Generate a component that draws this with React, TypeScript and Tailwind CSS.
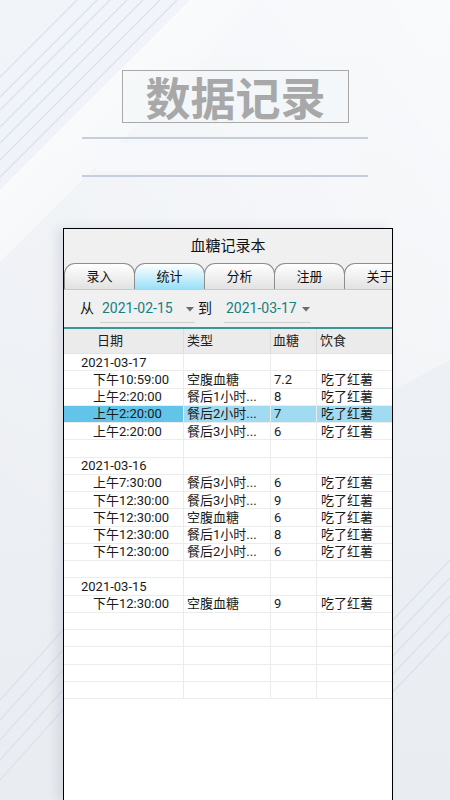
import React from "react";

type Row = { date?: string; time?: string; type?: string; sugar?: string; food?: string; selected?: boolean };

const rows: Row[] = [
  { date: "2021-03-17" },
  { time: "下午10:59:00", type: "空腹血糖", sugar: "7.2", food: "吃了红薯" },
  { time: "上午2:20:00", type: "餐后1小时...", sugar: "8", food: "吃了红薯" },
  { time: "上午2:20:00", type: "餐后2小时...", sugar: "7", food: "吃了红薯", selected: true },
  { time: "上午2:20:00", type: "餐后3小时...", sugar: "6", food: "吃了红薯" },
  {},
  { date: "2021-03-16" },
  { time: "上午7:30:00", type: "餐后3小时...", sugar: "6", food: "吃了红薯" },
  { time: "下午12:30:00", type: "餐后3小时...", sugar: "9", food: "吃了红薯" },
  { time: "下午12:30:00", type: "空腹血糖", sugar: "6", food: "吃了红薯" },
  { time: "下午12:30:00", type: "餐后1小时...", sugar: "8", food: "吃了红薯" },
  { time: "下午12:30:00", type: "餐后2小时...", sugar: "6", food: "吃了红薯" },
  {},
  { date: "2021-03-15" },
  { time: "下午12:30:00", type: "空腹血糖", sugar: "9", food: "吃了红薯" },
  {},
  {},
  {},
  {},
  {},
];

const tabs = ["录入", "统计", "分析", "注册", "关于"];

// background decoration: white diagonal band and thin stripes
const Backdrop: React.FC = () => (
  <svg className="absolute inset-0" width="450" height="800" viewBox="0 0 450 800">
    <defs>
      <linearGradient id="band" x1="0" y1="0" x2="1" y2="1">
        <stop offset="0" stopColor="#ffffff" stopOpacity="0.95" />
        <stop offset="1" stopColor="#ffffff" stopOpacity="0" />
      </linearGradient>
      <linearGradient id="glow" x1="1" y1="0" x2="0" y2="1">
        <stop offset="0" stopColor="#ffffff" stopOpacity="0.55" />
        <stop offset="0.6" stopColor="#ffffff" stopOpacity="0.15" />
        <stop offset="1" stopColor="#ffffff" stopOpacity="0" />
      </linearGradient>
    </defs>
    <polygon points="262,0 450,0 450,360 0,600 0,262" fill="url(#glow)" />
    <polygon points="190,0 262,0 0,262 0,190" fill="url(#band)" />
    {[77, 97, 110, 127, 143, 160, 177].map((x) => (
      <line key={x} x1={x} y1={0} x2={0} y2={x} stroke="#d6e2f0" strokeWidth="1.2" />
    ))}
    {[560, 578, 596, 614, 632].map((y) => (
      <line key={y} x1={393} y1={y + 60} x2={450} y2={y} stroke="#d6e2f0" strokeWidth="1.2" />
    ))}
    {[700, 720, 740, 760, 780].map((y) => (
      <line key={y} x1={0} y1={y} x2={63} y2={y - 70} stroke="#d9e3ef" strokeWidth="1.2" />
    ))}
  </svg>
);

const Arrow: React.FC = () => (
  <svg width="8" height="5" viewBox="0 0 8 5" className="mt-[2px]">
    <polygon points="0,0 8,0 4,4.5" fill="#6b6b6b" />
  </svg>
);

const App: React.FC = () => {
  return (
    <div
      className="relative w-[450px] h-[800px] overflow-hidden bg-gradient-to-b from-[#f1f4f8] to-[#e9ecf0] flex flex-col"
      style={{ fontFamily: 'Roboto, "Noto Sans CJK SC", sans-serif' }}
    >
      <Backdrop />

      <div className="relative flex flex-col">
        <div className="mt-[70px] ml-[122px] w-[227px] h-[53px] border border-[#a9a9a9] bg-[#f4f6f9]/60 flex items-center justify-center">
          <span
            className="text-[45px] leading-none font-bold text-[#a8a8a8]"
            style={{ fontFamily: '"Noto Sans CJK SC", sans-serif' }}
          >
            数据记录
          </span>
        </div>

        <div className="mt-[14px] ml-[82px] w-[286px] h-[2px] bg-[#c6cddb]" />
        <div className="mt-[4px] ml-[96px] w-[262px] h-[28px] bg-[#f6f8fb]" />
        <div className="mt-[4px] ml-[82px] w-[286px] h-[2px] bg-[#c6cddb]" />
      </div>

      <div className="relative mt-[51px] ml-[63px] w-[330px] flex-1 border-x border-t border-black bg-white flex flex-col shadow-[-6px_0_10px_rgba(120,130,150,0.18)]">
        <div className="bg-[#f0f0f0]">
          <div className="h-[34px] flex items-center justify-center text-[15px] text-[#111]">血糖记录本</div>

          <div className="h-[26px] flex overflow-hidden">
            {tabs.map((t, i) => (
              <div
                key={t}
                className={
                  "shrink-0 w-[71px] h-[26px] -mr-px rounded-t-[11px] border border-b-0 border-[#8d8d8d] flex items-center justify-center text-[13px] text-[#111] " +
                  (i === 1
                    ? "bg-gradient-to-b from-[#ffffff] to-[#98e0f7]"
                    : "bg-gradient-to-b from-[#ffffff] to-[#e2e2e2]")
                }
              >
                {t}
              </div>
            ))}
          </div>
          <div className="h-px bg-[#c9c9c9]" />

          <div className="h-[37px] flex items-center text-[14px]">
            <span className="ml-[16px] text-[#111]">从</span>
            <div className="ml-[6px] w-[95px] h-[29px] border-b border-[#cfcfcf] flex items-center justify-between pr-[1px]">
              <span className="ml-[2px] text-[#16807f]">2021-02-15</span>
              <Arrow />
            </div>
            <span className="ml-[3px] text-[#111]">到</span>
            <div className="ml-[12px] w-[87px] h-[29px] border-b border-[#cfcfcf] flex items-center justify-between pr-[1px]">
              <span className="ml-[2px] text-[#16807f]">2021-03-17</span>
              <Arrow />
            </div>
          </div>
          <div className="h-[2px] bg-[#3b9797]" />
        </div>

        <div className="grid grid-cols-[120px_87px_46px_1fr] h-[25px] bg-[#ebebeb] text-[13px] text-[#222] border-b border-[#e2e2e2]">
          <div className="pl-[33px] flex items-center border-r border-[#dcdcdc]">日期</div>
          <div className="pl-[3px] flex items-center border-r border-[#dcdcdc]">类型</div>
          <div className="pl-[2px] flex items-center border-r border-[#dcdcdc]">血糖</div>
          <div className="pl-[3px] flex items-center">饮食</div>
        </div>

        <div className="flex flex-col">
          {rows.map((r, i) => {
            const cell = "flex items-center border-r border-[#ebebeb] whitespace-nowrap overflow-hidden";
            return (
              <div
                key={i}
                className="grid grid-cols-[120px_87px_46px_1fr] h-[17.25px] text-[13px] leading-none text-[#1a1a1a] border-b border-[#ececec]"
              >
                <div className={cell + (r.date ? " pl-[17px]" : " pl-[29px]") + (r.selected ? " bg-[#61c4e8]" : "")}>
                  {r.date ?? r.time ?? ""}
                </div>
                <div className={cell + " pl-[3px]" + (r.selected ? " bg-[#a0dbf1]" : "")}>{r.type ?? ""}</div>
                <div className={cell + " pl-[3px]" + (r.selected ? " bg-[#a0dbf1]" : "")}>{r.sugar ?? ""}</div>
                <div className={"flex items-center pl-[4px]" + (r.selected ? " bg-[#a0dbf1]" : "")}>{r.food ?? ""}</div>
              </div>
            );
          })}
        </div>
      </div>
    </div>
  );
};

export default App;
